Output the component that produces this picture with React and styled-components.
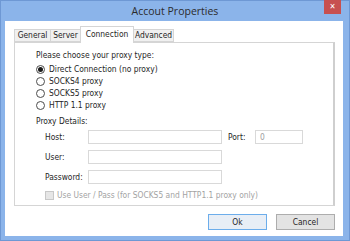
import React from "react";
import styled, { createGlobalStyle } from "styled-components";

const GlobalStyle = createGlobalStyle`
  html, body {
    margin: 0;
    padding: 0;
    width: 350px;
    height: 241px;
    overflow: hidden;
  }
  body {
    font-family: "DejaVu Sans Condensed", "DejaVu Sans", Tahoma, sans-serif;
    font-stretch: condensed;
  }
`;

const Frame = styled.div`
  width: 350px;
  height: 241px;
  box-sizing: border-box;
  background: #8bb4ea;
  border: 1px solid #6e98d4;
  display: flex;
  flex-direction: column;
`;

const TitleBar = styled.div`
  height: 20px;
  display: flex;
  align-items: flex-start;
  position: relative;
`;

const Title = styled.div`
  flex: 1;
  text-align: center;
  font-family: "Open Sans", "Noto Sans", sans-serif;
  font-stretch: normal;
  font-size: 10.5px;
  line-height: 21px;
  color: #2b2b2b;
`;

const CloseButton = styled.div`
  position: absolute;
  top: -1px;
  right: 8px;
  width: 17px;
  height: 14px;
  background: #c75050;
  color: #fff;
  font-family: "DejaVu Sans", sans-serif;
  font-size: 8px;
  font-weight: bold;
  line-height: 14px;
  text-align: center;
`;

const Client = styled.div`
  flex: 1;
  margin: 0 6px 5px 4px;
  background: #fff;
  display: flex;
  flex-direction: column;
  padding: 5px 8px 6px 9px;
`;

const TabStrip = styled.div`
  display: flex;
  align-items: flex-end;
  height: 16px;
  position: relative;
  z-index: 1;
`;

const Tab = styled.div`
  box-sizing: border-box;
  width: ${(p) => p.w}px;
  height: ${(p) => (p.active ? "17px" : "13px")};
  margin-bottom: ${(p) => (p.active ? "-1px" : "0")};
  margin-left: ${(p) => (p.first ? "0" : "-1px")};
  border: 1px solid #d5d5d5;
  border-bottom: ${(p) => (p.active ? "none" : "1px solid #d5d5d5")};
  background: ${(p) => (p.active ? "#fff" : "#f0f0f0")};
  font-size: 8.4px;
  line-height: ${(p) => (p.active ? "14px" : "11px")};
  text-align: center;
  color: #1e1e1e;
  white-space: nowrap;
`;

const Panel = styled.div`
  height: 164px;
  box-sizing: border-box;
  border: 1px solid #d5d5d5;
  border-right: 2px solid #cfcfcf;
  padding: 6px 0 0 21px;
  display: flex;
  flex-direction: column;
  font-size: 8.4px;
  color: #1e1e1e;
`;

const Line = styled.div`
  line-height: 12px;
  white-space: nowrap;
`;

const RadioRow = styled.label`
  display: flex;
  align-items: center;
  gap: 4px;
  height: 12px;
  white-space: nowrap;
`;

const RadioDot = styled.span`
  width: 9px;
  height: 9px;
  box-sizing: border-box;
  border-radius: 50%;
  border: 1px solid #4d4d4d;
  background: #fff;
  display: flex;
  align-items: center;
  justify-content: center;
  &::after {
    content: "";
    width: 5px;
    height: 5px;
    border-radius: 50%;
    background: ${(p) => (p.checked ? "#1a1a1a" : "transparent")};
  }
`;

const Radios = styled.div`
  display: flex;
  flex-direction: column;
  margin-top: 2px;
`;

const Section = styled(Line)`
  margin-top: 4px;
`;

const Fields = styled.div`
  display: grid;
  grid-template-columns: 43px 134px 6px 27px 48px;
  row-gap: 6px;
  align-items: center;
  padding-left: 9px;
  margin-top: 3px;
`;

const FieldLabel = styled.span`
  white-space: nowrap;
`;

const Input = styled.div`
  box-sizing: border-box;
  height: 14px;
  border: 1px solid #d9d9d9;
  background: #fff;
  color: #a0a0a0;
  line-height: 12px;
  padding-left: 4px;
`;

const CheckRow = styled.div`
  display: flex;
  align-items: center;
  gap: 3px;
  padding-left: 9px;
  margin-top: 6px;
  color: #a3a3a3;
  white-space: nowrap;
`;

const CheckBox = styled.span`
  width: 9px;
  height: 9px;
  box-sizing: border-box;
  border: 1px solid #c8c8c8;
  background: #e6e6e6;
`;

const ButtonRow = styled.div`
  display: flex;
  justify-content: flex-end;
  gap: 9px;
  margin-top: 8px;
`;

const Button = styled.div`
  box-sizing: border-box;
  width: 59px;
  height: 16px;
  border: 1px solid ${(p) => (p.primary ? "#6cadeb" : "#adadad")};
  background: ${(p) => (p.primary ? "#e8eef6" : "#e3e3e3")};
  font-size: 8.4px;
  line-height: 14px;
  text-align: center;
  color: #1e1e1e;
`;

const tabs = [
  { label: "General", w: 37 },
  { label: "Server", w: 31 },
  { label: "Connection", w: 54 },
  { label: "Advanced", w: 41 },
];
const proxies = [
  "Direct Connection (no proxy)",
  "SOCKS4 proxy",
  "SOCKS5 proxy",
  "HTTP 1.1 proxy",
];

export default function App() {
  return (
    <>
      <GlobalStyle />
      <Frame>
        <TitleBar>
          <Title>Accout Properties</Title>
          <CloseButton>✕</CloseButton>
        </TitleBar>
        <Client>
          <TabStrip>
            {tabs.map((t, i) => (
              <Tab
                key={t.label}
                w={t.w}
                first={i === 0}
                active={t.label === "Connection"}
              >
                {t.label}
              </Tab>
            ))}
          </TabStrip>
          <Panel>
            <Line>Please choose your proxy type:</Line>
            <Radios>
              {proxies.map((p, i) => (
                <RadioRow key={p}>
                  <RadioDot checked={i === 0} />
                  {p}
                </RadioRow>
              ))}
            </Radios>
            <Section>Proxy Details:</Section>
            <Fields>
              <FieldLabel>Host:</FieldLabel>
              <Input />
              <span />
              <FieldLabel>Port:</FieldLabel>
              <Input>0</Input>
              <FieldLabel>User:</FieldLabel>
              <Input />
              <span />
              <span />
              <span />
              <FieldLabel>Password:</FieldLabel>
              <Input />
            </Fields>
            <CheckRow>
              <CheckBox />
              Use User / Pass (for SOCKS5 and HTTP1.1 proxy only)
            </CheckRow>
          </Panel>
          <ButtonRow>
            <Button primary>Ok</Button>
            <Button>Cancel</Button>
          </ButtonRow>
        </Client>
      </Frame>
    </>
  );
}
